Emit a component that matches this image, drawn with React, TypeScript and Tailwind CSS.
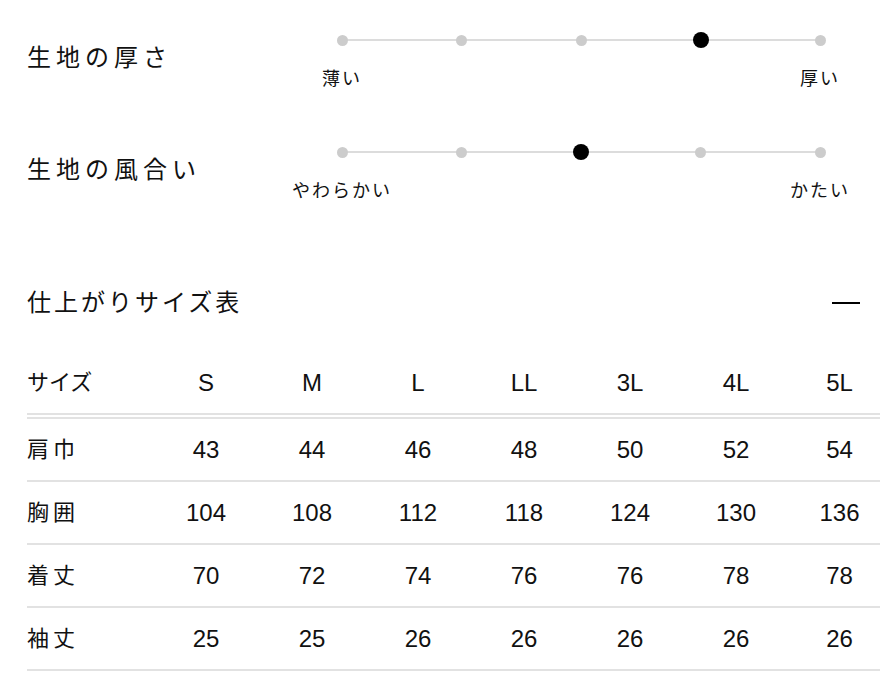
import React from 'react';

const sliders = [
  { title: '生地の厚さ', left: '薄い', right: '厚い', value: 3 },
  { title: '生地の風合い', left: 'やわらかい', right: 'かたい', value: 2 },
];

const sizes = ['S', 'M', 'L', 'LL', '3L', '4L', '5L'];

const rows = [
  { label: '肩巾', values: [43, 44, 46, 48, 50, 52, 54] },
  { label: '胸囲', values: [104, 108, 112, 118, 124, 130, 136] },
  { label: '着丈', values: [70, 72, 74, 76, 76, 78, 78] },
  { label: '袖丈', values: [25, 25, 26, 26, 26, 26, 26] },
];

function Slider({ title, left, right, value }: { title: string; left: string; right: string; value: number }) {
  return (
    <div className="flex items-center">
      <h3 className="w-[255px] pb-[7px] text-[24px] leading-[32px] tracking-[5px] text-[#111]">{title}</h3>
      <div className="flex-1 flex flex-col">
        {/* track */}
        <div className="relative flex items-center justify-between px-[52px] h-4">
          <div className="absolute left-[60px] right-[60px] top-[7px] h-[2px] bg-[#dcdcdc]" />
          {[0, 1, 2, 3, 4].map((i) => (
            <div key={i} className="relative z-10 w-4 h-4 flex items-center justify-center">
              {i === value ? (
                <div className="w-4 h-4 rounded-full bg-black" />
              ) : (
                <div className="w-[11px] h-[11px] rounded-full bg-[#cccccc]" />
              )}
            </div>
          ))}
        </div>
        <div className="flex justify-between mt-[19px] text-[18px] leading-6 tracking-[2px] text-[#111]">
          <span className="w-[120px] text-center">{left}</span>
          <span className="w-[120px] text-center">{right}</span>
        </div>
      </div>
    </div>
  );
}

export default function App() {
  return (
    <div
      className="w-[894px] h-[698px] bg-white pl-[27px] pr-[14px] pt-8 overflow-hidden"
      style={{ fontFamily: '"Liberation Sans", "Noto Sans CJK JP", sans-serif' }}
    >
      <div className="flex flex-col gap-[53px]">
        {sliders.map((s) => (
          <Slider key={s.title} {...s} />
        ))}
      </div>

      {/* size table */}
      <div className="mt-[84px] flex items-center justify-between pr-[20px]">
        <h2 className="text-[24px] leading-[32px] tracking-[3px] text-[#111]">仕上がりサイズ表</h2>
        <div className="w-[28px] h-[2px] bg-black" />
      </div>

      <div className="mt-[33px] text-[#111]">
        <div className="grid grid-cols-[126px_repeat(6,106px)_93px] h-[67px] items-center border-b-[6px] border-double border-[#e2e2e2]">
          <span className="text-[22px] leading-[61px] h-[61px]">サイズ</span>
          {sizes.map((s, i) => (
            <span
              key={s}
              className={`text-[24px] leading-[61px] h-[61px] text-center ${i === 6 ? 'pl-[8px]' : ''}`}
            >
              {s}
            </span>
          ))}
        </div>
        {rows.map((r) => (
          <div
            key={r.label}
            className="grid grid-cols-[126px_repeat(6,106px)_93px] h-[63px] items-center border-b-2 border-[#e2e2e2]"
          >
            <span className="text-[22px] tracking-[4px]">{r.label}</span>
            {r.values.map((v, i) => (
              <span key={i} className={`text-[24px] text-center ${i === 6 ? 'pl-[8px]' : ''}`}>
                {v}
              </span>
            ))}
          </div>
        ))}
      </div>
    </div>
  );
}
